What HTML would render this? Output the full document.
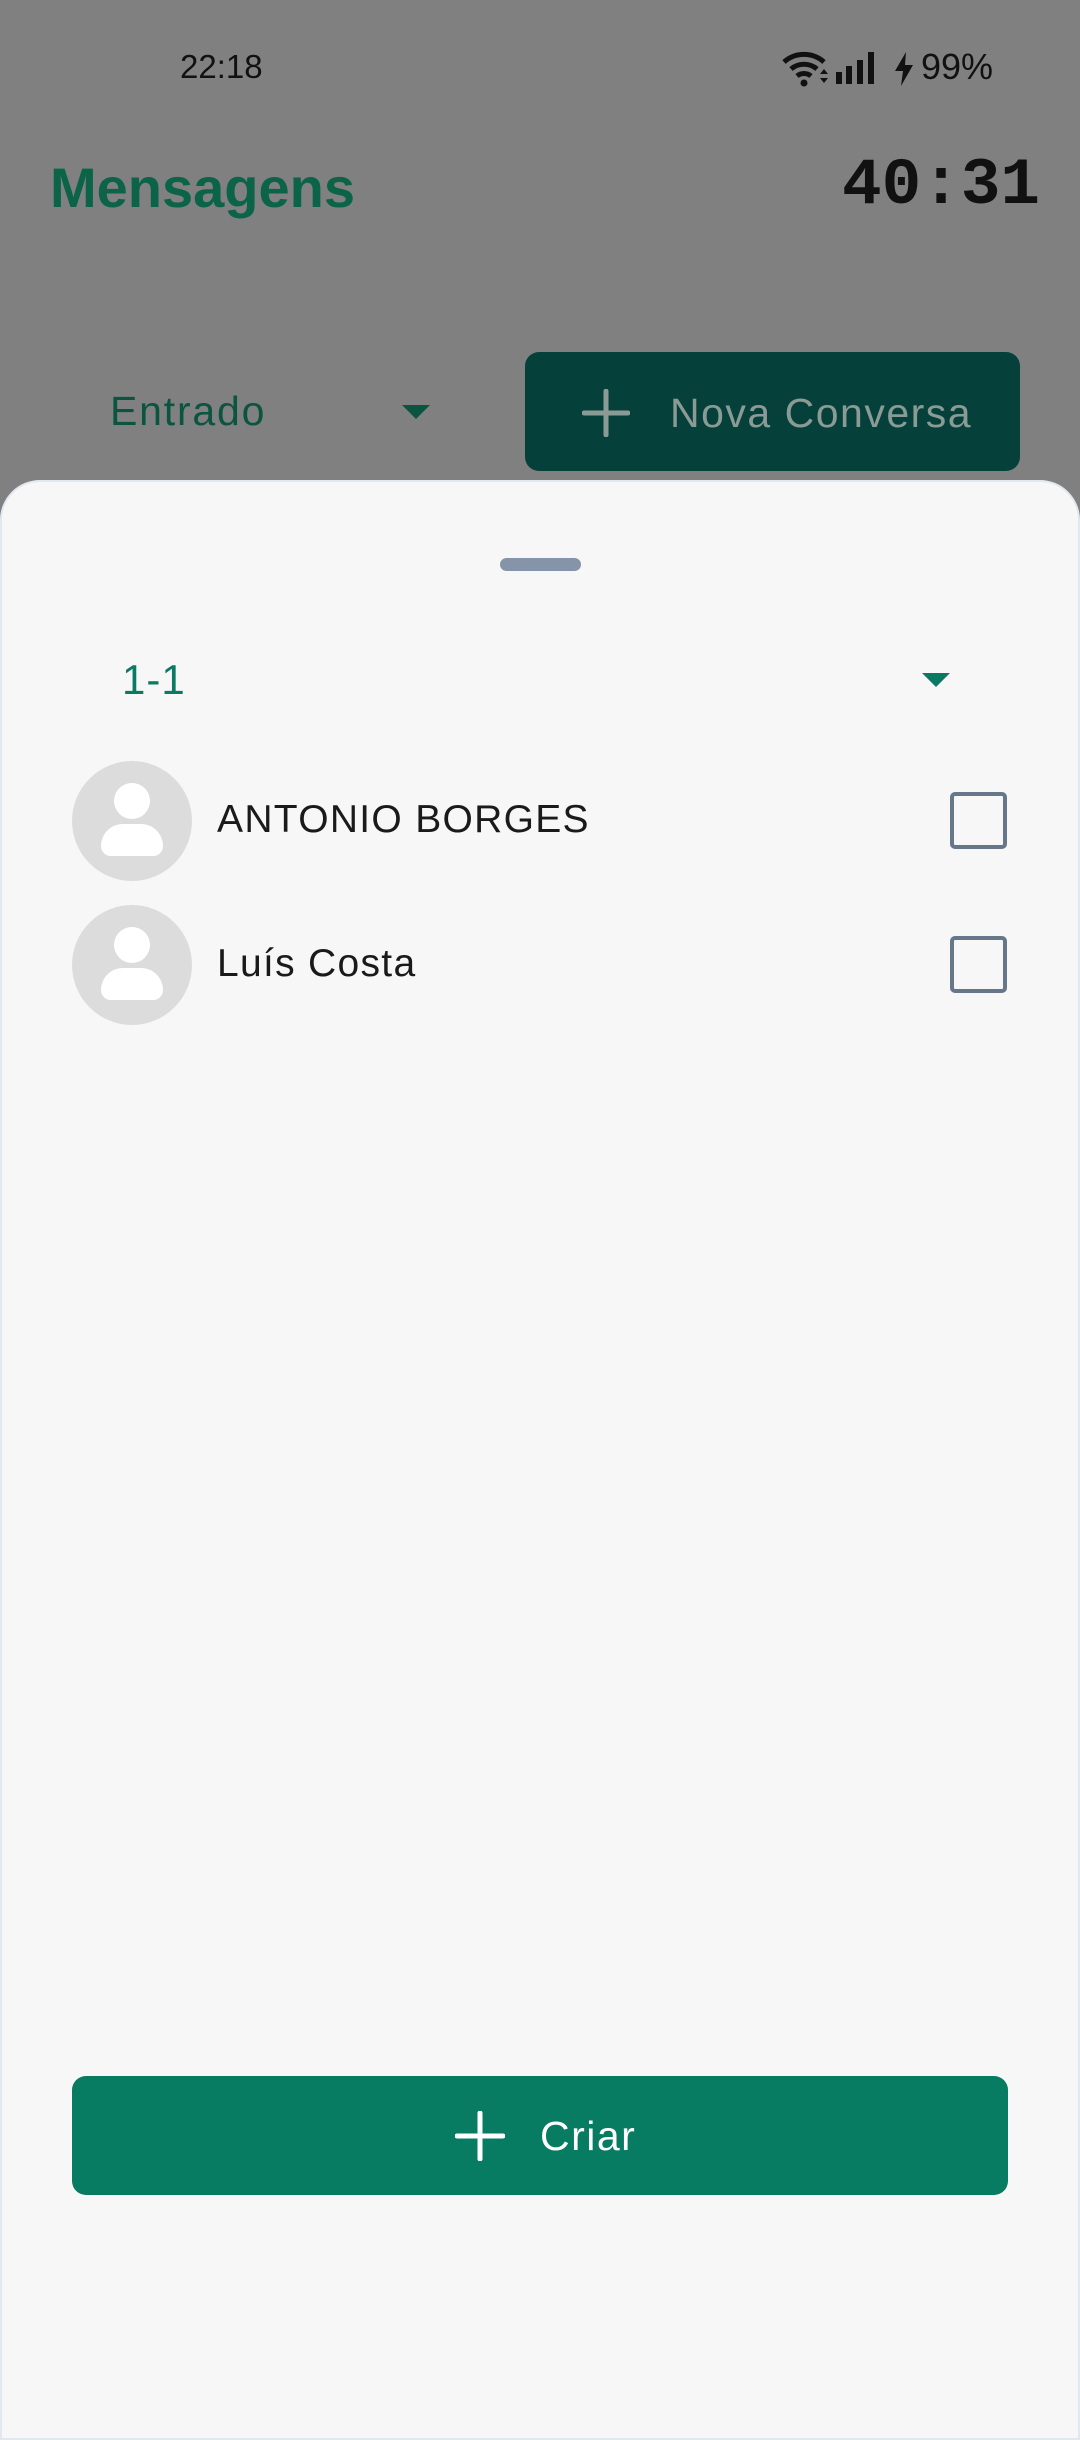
<!DOCTYPE html>
<html><head><meta charset="utf-8">
<style>
*{margin:0;padding:0;box-sizing:border-box}
html,body{width:1080px;height:2400px;overflow:hidden;background:#808080;font-family:"Liberation Sans",sans-serif}
.abs{position:absolute}
</style></head><body>
<div class="abs" style="left:180px;top:48px;font-size:33px;color:#111">22:18</div>
<svg class="abs" style="left:782px;top:48px" width="50" height="40" viewBox="0 0 50 40">
<path d="M2 14 A30 30 0 0 1 42 14" stroke="#111" stroke-width="5" fill="none"/>
<path d="M9 21 A20 20 0 0 1 35 21" stroke="#111" stroke-width="5" fill="none"/>
<path d="M15 28 A11 11 0 0 1 29 28" stroke="#111" stroke-width="5" fill="none"/>
<circle cx="22" cy="35" r="3.5" fill="#111"/>
<path d="M38 26 l4 -5 l4 5z M38 30 l4 5 l4 -5z" fill="#111"/></svg>
<svg class="abs" style="left:836px;top:52px" width="46" height="32"><rect x="0" y="20" width="6" height="12" fill="#111"/><rect x="10" y="14" width="6" height="18" fill="#111"/><rect x="21" y="8" width="6" height="24" fill="#111"/><rect x="32" y="0" width="6" height="32" fill="#111"/></svg>
<svg class="abs" style="left:893px;top:52px" width="22" height="34"><path d="M13 0 L2 19 H10 L8 34 L20 13 H12 Z" fill="#111"/></svg>
<div class="abs" style="left:921px;top:46px;font-size:36px;color:#111">99%</div>

<div class="abs" style="left:50px;top:155px;font-size:56px;font-weight:bold;color:#0b6448">Mensagens</div>
<div class="abs" style="left:842px;top:148px;font-family:'Liberation Mono',monospace;font-size:66px;font-weight:bold;color:#111;letter-spacing:0px">40:31</div>

<div class="abs" style="left:110px;top:388px;font-size:41px;color:#0b5440;letter-spacing:1.8px">Entrado</div>
<div class="abs" style="left:402px;top:405px;width:0;height:0;border-left:14px solid transparent;border-right:14px solid transparent;border-top:14px solid #0b5440"></div>
<div class="abs" style="left:525px;top:352px;width:495px;height:119px;background:#05413a;border-radius:14px"></div>
<svg class="abs" style="left:582px;top:389px" width="48" height="48"><path d="M24 2V46M2 24H46" stroke="#8a9a94" stroke-width="5" stroke-linecap="round"/></svg>
<div class="abs" style="left:670px;top:390px;font-size:41px;color:#8a9a94;letter-spacing:1.5px">Nova Conversa</div>

<div class="abs" style="left:0;top:480px;width:1080px;height:1960px;background:#f7f7f7;border-radius:40px 40px 0 0;border:2px solid #e2e8ef"></div>
<div class="abs" style="left:500px;top:558px;width:81px;height:13px;background:#8694aa;border-radius:7px"></div>

<div class="abs" style="left:122px;top:656px;font-size:42px;color:#0a7a62;letter-spacing:1px">1-1</div>
<div class="abs" style="left:922px;top:673px;width:0;height:0;border-left:14px solid transparent;border-right:14px solid transparent;border-top:14px solid #0a7a62"></div>

<div class="abs" style="left:72px;top:761px;width:120px;height:120px;border-radius:50%;background:#dcdcdc;overflow:hidden">
<div class="abs" style="left:42px;top:22px;width:36px;height:36px;border-radius:50%;background:#fff"></div>
<div class="abs" style="left:29px;top:63px;width:62px;height:32px;border-radius:31px 31px 14px 14px;background:#fff"></div></div>
<div class="abs" style="left:217px;top:798px;font-size:39px;color:#1a1a1a;letter-spacing:1.3px">ANTONIO BORGES</div>
<div class="abs" style="left:950px;top:792px;width:57px;height:57px;border:4px solid #67778a;border-radius:5px"></div>

<div class="abs" style="left:72px;top:905px;width:120px;height:120px;border-radius:50%;background:#dcdcdc;overflow:hidden">
<div class="abs" style="left:42px;top:22px;width:36px;height:36px;border-radius:50%;background:#fff"></div>
<div class="abs" style="left:29px;top:63px;width:62px;height:32px;border-radius:31px 31px 14px 14px;background:#fff"></div></div>
<div class="abs" style="left:217px;top:942px;font-size:39px;color:#1a1a1a;letter-spacing:1.3px">Luís Costa</div>
<div class="abs" style="left:950px;top:936px;width:57px;height:57px;border:4px solid #67778a;border-radius:5px"></div>

<div class="abs" style="left:72px;top:2076px;width:936px;height:119px;background:#087c63;border-radius:14px"></div>
<svg class="abs" style="left:455px;top:2111px" width="50" height="50"><path d="M25 2V48M2 25H48" stroke="#fff" stroke-width="5" stroke-linecap="round"/></svg>
<div class="abs" style="left:540px;top:2113px;font-size:41px;color:#fff;letter-spacing:1.5px">Criar</div>
</body></html>
